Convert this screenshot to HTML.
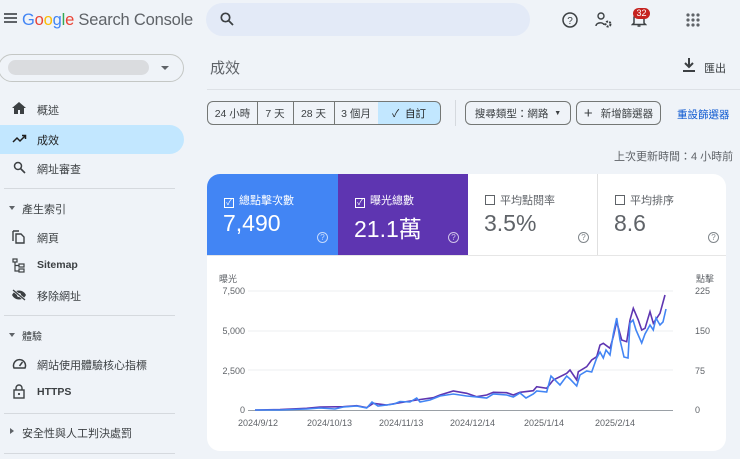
<!DOCTYPE html>
<html><head><meta charset="utf-8"><style>
*{box-sizing:border-box;margin:0;padding:0}
body{width:740px;height:459px;overflow:hidden;background:#eff3f8;font-family:"Liberation Sans","Noto Sans CJK TC",sans-serif;color:#3c4043;position:relative}
.a{position:absolute}
.t{font-size:11px;color:#3c4043;white-space:nowrap}
.sep{position:absolute;left:4px;width:171px;height:1px;background:#d5d9de}
.btn{position:absolute;top:101px;height:24px;border:1px solid #747775;font-size:10.5px;display:flex;align-items:center;justify-content:center;color:#3c4043}
.card{position:absolute;top:174px;height:81px}
.card .l{position:absolute;left:17px;top:18px;font-size:11px}
.card .v{position:absolute;left:16px;top:36px;font-size:23px}
.card .q{position:absolute;left:110px;top:58px;width:11px;height:11px;border:1px solid;border-radius:50%;font-size:8px;text-align:center;line-height:9px}
.cb{display:inline-block;width:10px;height:10px;border:1px solid;margin-right:5px;vertical-align:-1px;font-size:8px;line-height:8px;text-align:center}
.yl{position:absolute;font-size:9px;color:#5f6368}
</style></head><body>
<!-- header -->
<div class="a" style="left:4px;top:13px;width:13px;height:2px;background:#5f6368;box-shadow:0 4px 0 #5f6368,0 8px 0 #5f6368"></div>
<div class="a" style="left:22px;top:11px;font-size:16.5px;white-space:nowrap;letter-spacing:-0.2px"><span style="color:#4285f4">G</span><span style="color:#ea4335">o</span><span style="color:#fbbc05">o</span><span style="color:#4285f4">g</span><span style="color:#34a853">l</span><span style="color:#ea4335">e</span><span style="color:#5f6368"> Search Console</span></div>
<div class="a" style="left:206px;top:3px;width:324px;height:33px;border-radius:17px;background:#e3eaf7"></div>
<svg class="a" style="left:219px;top:11px" width="16" height="16" viewBox="0 0 16 16"><circle cx="6.5" cy="6.5" r="4.2" fill="none" stroke="#3c4043" stroke-width="1.7"/><path d="M9.5 9.5L14 14" stroke="#3c4043" stroke-width="1.8"/></svg>
<svg class="a" style="left:561px;top:11px" width="18" height="18" viewBox="0 0 18 18"><circle cx="9" cy="9" r="7" fill="none" stroke="#3c4043" stroke-width="1.5"/><text x="9" y="13" font-size="10" text-anchor="middle" fill="#3c4043" font-family="Liberation Sans">?</text></svg>
<svg class="a" style="left:595px;top:11px" width="18" height="18" viewBox="0 0 18 18"><circle cx="6" cy="5" r="3" fill="none" stroke="#3c4043" stroke-width="1.4"/><path d="M1 15c0-4 8-4 8-1" fill="none" stroke="#3c4043" stroke-width="1.4"/><circle cx="13" cy="13" r="2.5" fill="none" stroke="#3c4043" stroke-width="2" stroke-dasharray="2 1.2"/></svg>
<svg class="a" style="left:631px;top:10px" width="16" height="18" viewBox="0 0 16 18"><path d="M3 13V8a5 5 0 0110 0v5l1.5 1.5h-13z" fill="none" stroke="#3c4043" stroke-width="1.5"/><path d="M6.5 16h3" stroke="#3c4043" stroke-width="1.5"/></svg>
<div class="a" style="left:633px;top:8px;width:17px;height:11px;border-radius:6px;background:#c5221f;color:#fff;font-size:9px;text-align:center;line-height:11px">32</div>
<svg class="a" style="left:686px;top:13px" width="14" height="14" viewBox="0 0 14 14" fill="#5f6368"><circle cx="2" cy="2" r="1.6"/><circle cx="7" cy="2" r="1.6"/><circle cx="12" cy="2" r="1.6"/><circle cx="2" cy="7" r="1.6"/><circle cx="7" cy="7" r="1.6"/><circle cx="12" cy="7" r="1.6"/><circle cx="2" cy="12" r="1.6"/><circle cx="7" cy="12" r="1.6"/><circle cx="12" cy="12" r="1.6"/></svg>
<!-- property -->
<div class="a" style="left:-2px;top:54px;width:186px;height:28px;border:1px solid #c4c7c5;border-radius:14px"></div>
<div class="a" style="left:8px;top:60px;width:141px;height:15px;border-radius:8px;background:#dadcdf"></div>
<div class="a" style="left:161px;top:66px;border-left:4px solid transparent;border-right:4px solid transparent;border-top:4px solid #5f6368"></div>
<!-- nav -->
<svg class="a" style="left:12px;top:102px" width="14" height="12" viewBox="0 0 14 12"><path d="M7 0L0 6h2v6h4V8h2v4h4V6h2z" fill="#3c4043"/></svg>
<div class="a t" style="left:37px;top:102px">概述</div>
<div class="a" style="left:0;top:125px;width:184px;height:29px;border-radius:0 15px 15px 0;background:#c2e7ff"></div>
<svg class="a" style="left:12px;top:132px" width="15" height="12" viewBox="0 0 15 12"><path d="M1 10l4-4 3 3 5-5M10 3.5h3.5V7" fill="none" stroke="#1f1f1f" stroke-width="1.5"/></svg>
<div class="a t" style="left:37px;top:132px;color:#1f1f1f">成效</div>
<svg class="a" style="left:13px;top:161px" width="13" height="13" viewBox="0 0 13 13"><circle cx="5" cy="5" r="3.5" fill="none" stroke="#3c4043" stroke-width="1.5"/><path d="M7.5 7.5L12 12" stroke="#3c4043" stroke-width="1.6"/></svg>
<div class="a t" style="left:37px;top:161px">網址審查</div>
<div class="sep" style="top:188px"></div>
<div class="a" style="left:9px;top:206px;border-left:3px solid transparent;border-right:3px solid transparent;border-top:4px solid #5f6368"></div>
<div class="a t" style="left:22px;top:201px">產生索引</div>
<svg class="a" style="left:12px;top:229px" width="13" height="15" viewBox="0 0 13 15"><path d="M1 2v10M1 2h6M4 5h5l3 3v6H4z" fill="none" stroke="#3c4043" stroke-width="1.4"/></svg>
<div class="a t" style="left:37px;top:230px">網頁</div>
<svg class="a" style="left:12px;top:258px" width="13" height="15" viewBox="0 0 13 15"><rect x="1" y="1" width="4" height="3" fill="none" stroke="#3c4043" stroke-width="1.2"/><rect x="7" y="6" width="5" height="3" fill="none" stroke="#3c4043" stroke-width="1.2"/><rect x="7" y="11" width="5" height="3" fill="none" stroke="#3c4043" stroke-width="1.2"/><path d="M3 4v9h4M3 7.5h4" fill="none" stroke="#3c4043" stroke-width="1.2"/></svg>
<div class="a t" style="left:37px;top:259px;font-weight:bold;font-size:10.5px">Sitemap</div>
<svg class="a" style="left:11px;top:289px" width="16" height="12" viewBox="0 0 16 12"><path d="M1 6c3-6 11-6 14 0-3 6-11 6-14 0z" fill="#3c4043"/><circle cx="8" cy="6" r="2" fill="#eff3f8"/><path d="M2 1l12 10" stroke="#eff3f8" stroke-width="2.5"/><path d="M2 1l12 10" stroke="#3c4043" stroke-width="1.3"/></svg>
<div class="a t" style="left:37px;top:288px">移除網址</div>
<div class="sep" style="top:315px"></div>
<div class="a" style="left:9px;top:333px;border-left:3px solid transparent;border-right:3px solid transparent;border-top:4px solid #5f6368"></div>
<div class="a t" style="left:22px;top:328px;font-size:10px">體驗</div>
<svg class="a" style="left:12px;top:357px" width="15" height="13" viewBox="0 0 15 13"><path d="M2 11a6 6 0 1111 0z" fill="none" stroke="#3c4043" stroke-width="1.5"/><path d="M7.5 9l3-4" stroke="#3c4043" stroke-width="1.5"/></svg>
<div class="a t" style="left:37px;top:357px">網站使用體驗核心指標</div>
<svg class="a" style="left:13px;top:384px" width="12" height="15" viewBox="0 0 12 15"><rect x="1" y="6" width="10" height="8" fill="none" stroke="#3c4043" stroke-width="1.4"/><path d="M3 6V4a3 3 0 016 0v2" fill="none" stroke="#3c4043" stroke-width="1.4"/><circle cx="6" cy="10" r="1.1" fill="#3c4043"/></svg>
<div class="a t" style="left:37px;top:386px;font-weight:bold;font-size:10.5px">HTTPS</div>
<div class="sep" style="top:413px"></div>
<div class="a" style="left:10px;top:428px;border-top:3px solid transparent;border-bottom:3px solid transparent;border-left:4px solid #5f6368"></div>
<div class="a t" style="left:22px;top:425px">安全性與人工判決處罰</div>
<div class="sep" style="top:453px"></div>
<!-- main -->
<div class="a" style="left:210px;top:57px;font-size:15px;color:#5f6368">成效</div>
<div class="a" style="left:207px;top:89px;width:533px;height:1px;background:#dde1e6"></div>
<svg class="a" style="left:683px;top:58px" width="12" height="14" viewBox="0 0 12 14"><path d="M6 0v8M2 5l4 4 4-4" fill="none" stroke="#3c4043" stroke-width="2"/><path d="M0 13h12" stroke="#3c4043" stroke-width="2"/></svg>
<div class="a t" style="left:704px;top:60px">匯出</div>
<div class="btn" style="left:207px;width:51px;border-radius:6px 0 0 6px">24 小時</div>
<div class="btn" style="left:257px;width:37px;border-left:none">7 天</div>
<div class="btn" style="left:293px;width:42px;border-left:none">28 天</div>
<div class="btn" style="left:334px;width:45px;border-left:none">3 個月</div>
<div class="btn" style="left:378px;width:63px;border-left:none;border-radius:0 6px 6px 0;background:#c2e7ff;color:#1f1f1f">✓&nbsp;&nbsp;自訂</div>
<div class="a" style="left:455px;top:100px;width:1px;height:26px;background:#d5d9de"></div>
<div class="btn" style="left:465px;width:106px;border-radius:6px">搜尋類型：網路&nbsp;&nbsp;<span style="font-size:7px">▼</span></div>
<div class="btn" style="left:576px;width:85px;border-radius:6px"><span style="font-size:15px;margin-right:8px">+</span>新增篩選器</div>
<div class="a" style="left:677px;top:107px;font-size:10.5px;color:#0b57d0">重設篩選器</div>
<div class="a t" style="left:614px;top:148px;color:#5f6368">上次更新時間：4 小時前</div>
<!-- cards -->
<div class="a" style="left:207px;top:174px;width:519px;height:277px;background:#fff;border-radius:13px"></div>
<div class="card" style="left:207px;width:131px;background:#4285f4;color:#fff;border-radius:13px 0 0 0"><div class="l"><span class="cb">✓</span>總點擊次數</div><div class="v">7,490</div><div class="q" style="color:#c6dafc">?</div></div>
<div class="card" style="left:338px;width:130px;background:#5e35b1;color:#fff"><div class="l"><span class="cb">✓</span>曝光總數</div><div class="v">21.1萬</div><div class="q" style="color:#d1c4e9">?</div></div>
<div class="card" style="left:468px;width:130px;color:#5f6368;border-right:1px solid #e0e0e0"><div class="l"><span class="cb" style="border-color:#5f6368"></span>平均點閱率</div><div class="v" style="color:#5f6368">3.5%</div><div class="q" style="color:#80868b">?</div></div>
<div class="card" style="left:598px;width:128px;color:#5f6368"><div class="l"><span class="cb" style="border-color:#5f6368"></span>平均排序</div><div class="v" style="color:#5f6368">8.6</div><div class="q" style="color:#80868b">?</div></div>
<div class="a" style="left:207px;top:255px;width:519px;height:1px;background:#e6e6e6"></div>
<!-- chart -->
<div class="yl" style="left:219px;top:272px">曝光</div>
<div class="yl" style="left:696px;top:272px">點擊</div>
<div class="yl" style="left:210px;top:286px;width:35px;text-align:right">7,500</div>
<div class="yl" style="left:210px;top:326px;width:35px;text-align:right">5,000</div>
<div class="yl" style="left:210px;top:366px;width:35px;text-align:right">2,500</div>
<div class="yl" style="left:210px;top:405px;width:35px;text-align:right">0</div>
<div class="yl" style="left:695px;top:286px">225</div>
<div class="yl" style="left:695px;top:326px">150</div>
<div class="yl" style="left:695px;top:366px">75</div>
<div class="yl" style="left:695px;top:405px">0</div>
<svg class="a" style="left:0;top:0" width="740" height="459">
<path d="M248 291H673M248 331H673M248 370H673" stroke="#eceff1"/>
<path d="M248 410.5H673" stroke="#9aa0a6"/>
<polyline fill="none" stroke="#5e35b1" stroke-width="1.6" points="255,410 280,409.5 306.7,408.3 320,407 343.3,406.7 356.7,405.7 366.7,407.7 373.3,403.3 386.7,405 400,402.7 416.7,400 433.3,397.7 440,395 453.3,391 466.7,393.3 476.7,396.7 486.7,395 493.3,392.3 506.7,392.7 513.3,395 520,392.3 533.3,390.7 536.7,386.7 546.7,388.3 553.3,380 566.7,373.3 570,370 576.7,380 578.3,371.7 586.7,366.7 591.7,360 596.7,356.7 600,345 603.3,343.3 610,348.3 613.3,336.7 616.7,321.7 621.7,340 626.7,341.7 630,320 633.3,308.3 638.3,320 641.7,330 645,328.3 650,311.7 653.3,323.3 660,313.3 665,295"/>
<polyline fill="none" stroke="#4285f4" stroke-width="1.6" points="255,410 280,410 306.7,409 320,408 335,409 343.3,407 356.7,406 366.7,408 372,402 378,406 386.7,405 394,404 400,401.5 410,402 416.7,398 420,402 430,400 440,396 453.3,394 466.7,396 476.7,397 486.7,398 493.3,394 506.7,395 513.3,397 520,393 526,398 533.3,394 536.7,391 546.7,392 551,376 560,385 566.7,376 570,379 576.7,386 580,375 586.7,371 591.7,372 596.7,358 600,352 603.3,358 606,350 610,355 613.3,334 616.7,318 620,340 624,357 628,358 630,323 633,320 636,330 641.7,343 645,334 650,325 653.3,330 656,318 660,325 663,322 666,309"/>
</svg>
<div class="yl" style="left:238px;top:418px">2024/9/12</div>
<div class="yl" style="left:307px;top:418px">2024/10/13</div>
<div class="yl" style="left:379px;top:418px">2024/11/13</div>
<div class="yl" style="left:450px;top:418px">2024/12/14</div>
<div class="yl" style="left:524px;top:418px">2025/1/14</div>
<div class="yl" style="left:595px;top:418px">2025/2/14</div>
</body></html>
